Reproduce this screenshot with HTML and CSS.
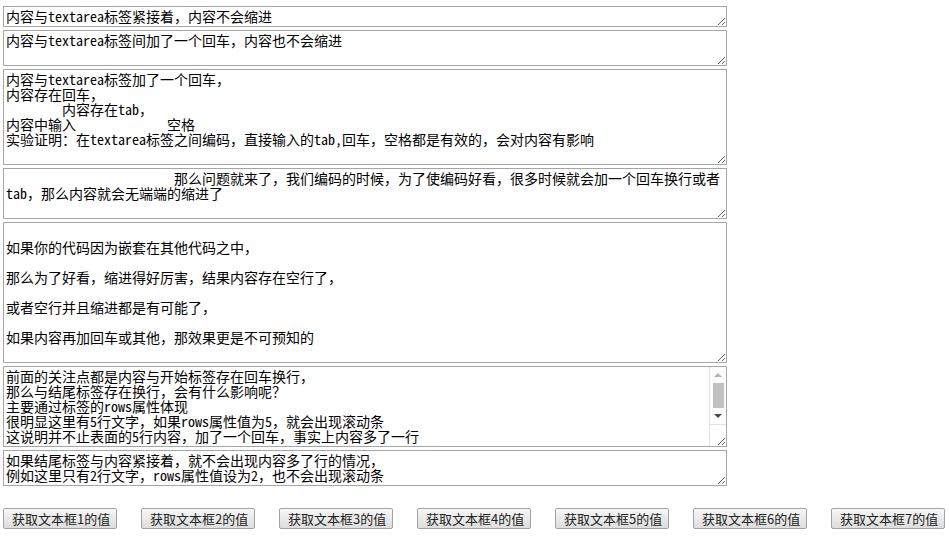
FILE: index.html
```html
<!DOCTYPE html>
<html lang="zh-CN">
<head>
<meta charset="utf-8">
<title>textarea</title>
<link rel="stylesheet" href="styles.css">
</head>
<body>
<div class="boxes">
<textarea class="ta" rows="1">内容与textarea标签紧接着，内容不会缩进</textarea>
<textarea class="ta" rows="2">
内容与textarea标签间加了一个回车，内容也不会缩进</textarea>
<textarea class="ta" rows="6">
内容与textarea标签加了一个回车，
内容存在回车，
	内容存在tab，
内容中输入             空格
实验证明：在textarea标签之间编码，直接输入的tab,回车，空格都是有效的，会对内容有影响</textarea>
<textarea class="ta" rows="3">			那么问题就来了，我们编码的时候，为了使编码好看，很多时候就会加一个回车换行或者
tab，那么内容就会无端端的缩进了</textarea>
<textarea class="ta" rows="9">

如果你的代码因为嵌套在其他代码之中，

那么为了好看，缩进得好厉害，结果内容存在空行了，

或者空行并且缩进都是有可能了，

如果内容再加回车或其他，那效果更是不可预知的
</textarea>
<div class="scroll-wrap">
<textarea class="ta ta-scroll" rows="5">
前面的关注点都是内容与开始标签存在回车换行，
那么与结尾标签存在换行，会有什么影响呢？
主要通过标签的rows属性体现
很明显这里有5行文字，如果rows属性值为5，就会出现滚动条
这说明并不止表面的5行内容，加了一个回车，事实上内容多了一行
</textarea>
<div class="vbar" aria-hidden="true">
<div class="vbtn"><span class="arrow-up"></span></div>
<div class="vtrack"><div class="vthumb"></div></div>
<div class="vbtn"><span class="arrow-down"></span></div>
<div class="vcorner"></div>
</div>
</div>
<textarea class="ta" rows="2">如果结尾标签与内容紧接着，就不会出现内容多了行的情况，
例如这里只有2行文字，rows属性值设为2，也不会出现滚动条</textarea>
</div>
<div class="buttons">
<button class="btn">获取文本框1的值</button>
<button class="btn">获取文本框2的值</button>
<button class="btn">获取文本框3的值</button>
<button class="btn">获取文本框4的值</button>
<button class="btn">获取文本框5的值</button>
<button class="btn">获取文本框6的值</button>
<button class="btn">获取文本框7的值</button>
</div>
</body>
</html>
```
FILE: styles.css
```css
html, body {
  background: #ffffff;
}
body {
  margin: 6px 0 0 3px;
}
.boxes {
  display: flex;
  flex-direction: column;
  align-items: flex-start;
  gap: 3px;
}
.ta {
  display: block;
  box-sizing: border-box;
  width: 724px;
  margin: 0;
  padding: 2px;
  border: 1px solid #a6a6a6;
  border-radius: 0;
  background: #ffffff;
  color: #000000;
  font-family: "Noto Sans Mono CJK SC", "Liberation Mono", "Noto Sans CJK SC", monospace;
  font-size: 14px;
  line-height: 15px;
  tab-size: 8;
  -moz-tab-size: 8;
  resize: both;
  outline: none;
}
.scroll-wrap {
  position: relative;
  width: 724px;
}
.ta-scroll {
  padding-right: 20px;
}
.vbar {
  position: absolute;
  top: 1px;
  right: 1px;
  bottom: 1px;
  width: 17px;
  box-sizing: border-box;
  border-left: 1px solid #e2e2e2;
  display: flex;
  flex-direction: column;
  pointer-events: none;
}
.vbtn {
  height: 16px;
  background: #fcfcfc;
  display: flex;
  align-items: center;
  justify-content: center;
}
.arrow-up {
  width: 0;
  height: 0;
  border-left: 4px solid transparent;
  border-right: 4px solid transparent;
  border-bottom: 4px solid #b3b3b3;
}
.arrow-down {
  width: 0;
  height: 0;
  border-left: 4px solid transparent;
  border-right: 4px solid transparent;
  border-top: 4px solid #4a4a4a;
}
.vtrack {
  height: 25px;
  background: #fcfcfc;
  display: flex;
  justify-content: center;
}
.vthumb {
  width: 11px;
  height: 25px;
  background: #c1c1c1;
}
.vcorner {
  flex: 1;
  border-top: 1px solid #e2e2e2;
  background: transparent;
}
.buttons {
  display: flex;
  gap: 24px;
  margin-top: 22px;
}
.btn {
  box-sizing: border-box;
  width: 114px;
  height: 21px;
  margin: 0;
  padding: 0 8px;
  border: 1px solid #a3a3a3;
  border-radius: 2px;
  background: linear-gradient(#f7f7f7, #dddddd);
  color: #222222;
  font-family: "Noto Sans CJK SC", "Liberation Sans", sans-serif;
  font-size: 13px;
  line-height: 19px;
  white-space: nowrap;
}
```
